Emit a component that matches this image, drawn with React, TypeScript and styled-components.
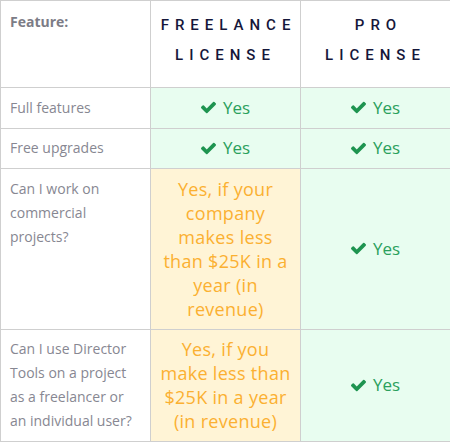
import styled, { createGlobalStyle } from "styled-components"

const Global = createGlobalStyle`
  body {
    margin: 0;
    background: #fff;
    font-family: "Open Sans", "Liberation Sans", sans-serif;
  }
`

const Table = styled.table`
  border-collapse: collapse;
  width: 450px;
  table-layout: fixed;
  border: 1px solid #cfcfcf;
`

const HeadCell = styled.th`
  border: 1px solid #cfcfcf;
  padding: 9px 2px 17px;
  vertical-align: top;
  font-family: Roboto, "DejaVu Sans", sans-serif;
  font-weight: 500;
  font-size: 15px;
  line-height: 30px;
  letter-spacing: 0.4em;
  text-indent: 0.4em;
  color: #15173a;
  text-align: center;
`

const FeatureHead = styled.th`
  border: 1px solid #cfcfcf;
  padding: 12px 9px;
  vertical-align: top;
  text-align: left;
  font-family: "Open Sans", sans-serif;
  font-weight: 700;
  font-size: 14px;
  line-height: 18px;
  color: #7c7c86;
`

const Label = styled.td`
  border: 1px solid #cfcfcf;
  padding: 7.75px 9px;
  vertical-align: top;
  font-size: 14px;
  line-height: 24px;
  color: #878792;
`

const Cell = styled.td<{ $tone: "green" | "amber" }>`
  border: 1px solid #cfcfcf;
  padding: 7.75px 9px;
  text-align: center;
  vertical-align: middle;
  line-height: 24px;
  background: ${(p) => (p.$tone === "green" ? "#e8fdf0" : "#fff4d6")};
  color: ${(p) => (p.$tone === "green" ? "#2aa05c" : "#fbb031")};
  font-size: ${(p) => (p.$tone === "green" ? "17px" : "18px")};
  letter-spacing: ${(p) => (p.$tone === "green" ? "0" : "0.3px")};
`

const YesMark = styled.div`
  display: flex;
  align-items: center;
  justify-content: center;
  height: 24px;
`

const Check = styled.svg`
  width: 15px;
  height: 13px;
  margin-right: 7px;
`

const Yes = () => (
  <YesMark>
    <Check viewBox="0 0 1550 1188">
      <path
        fill="#1e9450"
        d="M1550 232q0 40-28 68l-724 724-136 136q-28 28-68 28t-68-28l-136-136-362-362q-28-28-28-68t28-68l136-136q28-28 68-28t68 28l294 295 656-657q28-28 68-28t68 28l136 136q28 28 28 68z"
      />
    </Check>
    Yes
  </YesMark>
)

const rows: { label: string; freelance: string | null }[] = [
  { label: "Full features", freelance: null },
  { label: "Free upgrades", freelance: null },
  {
    label: "Can I work on commercial projects?",
    freelance: "Yes, if your company makes less than $25K in a year (in revenue)",
  },
  {
    label: "Can I use Director Tools on a project as a freelancer or an individual user?",
    freelance: "Yes, if you make less than $25K in a year (in revenue)",
  },
]

export default function App() {
  return (
    <>
      <Global />
      <Table>
        <colgroup>
          <col style={{ width: 150 }} />
          <col style={{ width: 150 }} />
          <col style={{ width: 150 }} />
        </colgroup>
        <thead>
          <tr>
            <FeatureHead>Feature:</FeatureHead>
            <HeadCell>FREELANCE LICENSE</HeadCell>
            <HeadCell>PRO LICENSE</HeadCell>
          </tr>
        </thead>
        <tbody>
          {rows.map((r) => (
            <tr key={r.label}>
              <Label>{r.label}</Label>
              {r.freelance ? (
                <Cell $tone="amber">{r.freelance}</Cell>
              ) : (
                <Cell $tone="green">
                  <Yes />
                </Cell>
              )}
              <Cell $tone="green">
                <Yes />
              </Cell>
            </tr>
          ))}
        </tbody>
      </Table>
    </>
  )
}
